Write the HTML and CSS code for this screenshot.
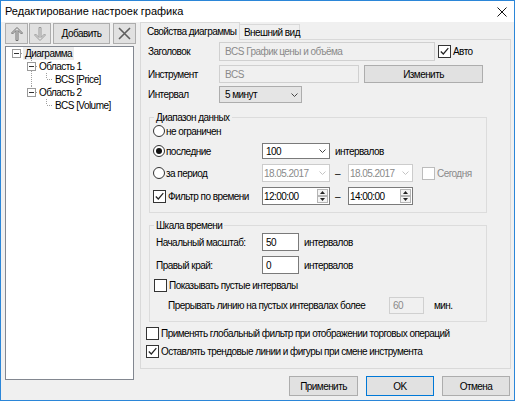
FILE: index.html
```html
<!DOCTYPE html>
<html lang="ru">
<head>
<meta charset="utf-8">
<title>Редактирование настроек графика</title>
<link rel="stylesheet" href="styles.css">
</head>
<body>
<div class="window">
  <div class="titlebar">
    <span class="title">Редактирование настроек графика</span>
    <svg class="close" width="10" height="10" viewBox="0 0 10 10"><path d="M0.5 0.5L9.5 9.5M9.5 0.5L0.5 9.5" stroke="#111" stroke-width="1" fill="none"/></svg>
  </div>
  <div class="main">
    <div class="leftcol">
      <div class="toolbar">
        <div class="tb tb-up"><svg width="12" height="14" viewBox="0 0 12 14"><path d="M6 0.5L11.5 6L10.5 7L7 3.5V13.5H5V3.5L1.5 7L0.5 6Z" fill="none" stroke="#6f6f6f"/></svg></div>
        <div class="tb tb-down"><svg width="12" height="14" viewBox="0 0 12 14"><path d="M6 13.5L11.5 8L10.5 7L7 10.5V0.5H5V10.5L1.5 7L0.5 8Z" fill="none" stroke="#9a9a9a"/></svg></div>
        <div class="tb tb-add">Добавить</div>
        <div class="tb tb-del"><svg width="13" height="13" viewBox="0 0 13 13"><path d="M1 1L12 12M12 1L1 12" stroke="#5f5f5f" stroke-width="1.6" fill="none"/></svg></div>
      </div>
      <div class="tree">
        <div class="trow">
          <svg width="17" height="13"><rect x="6.5" y="2.5" width="8" height="8" fill="#fff" stroke="#9a9a9a"/><path d="M8 6.5h5" stroke="#333"/><path d="M15 6.5h2" stroke="#a0a0a0" stroke-dasharray="1 1"/></svg>
          <span class="tlabel sel">Диаграмма</span>
        </div>
        <div class="trow">
          <svg width="31" height="13"><path d="M25.5 0v2M25.5 11v2M30 6.5h1" stroke="#a0a0a0" stroke-dasharray="1 1"/><rect x="21.5" y="2.5" width="8" height="8" fill="#fff" stroke="#9a9a9a"/><path d="M23 6.5h5" stroke="#333"/></svg>
          <span class="tlabel">Область 1</span>
        </div>
        <div class="trow">
          <svg width="47" height="13"><path d="M25.5 0v13M40.5 0v6M41 6.5h6" stroke="#a0a0a0" stroke-dasharray="1 1"/></svg>
          <span class="tlabel">BCS [Price]</span>
        </div>
        <div class="trow">
          <svg width="31" height="13"><path d="M25.5 0v2M30 6.5h1" stroke="#a0a0a0" stroke-dasharray="1 1"/><rect x="21.5" y="2.5" width="8" height="8" fill="#fff" stroke="#9a9a9a"/><path d="M23 6.5h5" stroke="#333"/></svg>
          <span class="tlabel">Область 2</span>
        </div>
        <div class="trow">
          <svg width="47" height="13"><path d="M40.5 0v6M41 6.5h6" stroke="#a0a0a0" stroke-dasharray="1 1"/></svg>
          <span class="tlabel">BCS [Volume]</span>
        </div>
      </div>
    </div>
    <div class="rightcol">
      <div class="tabs">
        <div class="tab active">Свойства диаграммы</div>
        <div class="tab inactive">Внешний вид</div>
      </div>
      <div class="page">
        <div class="frow r1">
          <span class="flabel">Заголовок</span>
          <div class="field dis w-title">BCS График цены и объёма</div>
          <span class="cb cb-auto"><svg width="9" height="9" viewBox="0 0 9 9"><path d="M0.8 4.5L3.3 7L8.3 1.2" fill="none" stroke="#222" stroke-width="1.2"/></svg></span>
          <span class="cb-text">Авто</span>
        </div>
        <div class="frow r2">
          <span class="flabel">Инструмент</span>
          <div class="field dis w-instr">BCS</div>
          <div class="btn w-change">Изменить</div>
        </div>
        <div class="frow r3">
          <span class="flabel">Интервал</span>
          <div class="dropbtn w-int">5 минут<svg class="chev" width="7" height="4" viewBox="0 0 7 4"><path d="M0.5 0.5L3.5 3.5L6.5 0.5" fill="none" stroke="#444"/></svg></div>
        </div>

        <div class="group group1">
          <span class="legend">Диапазон данных</span>
          <div class="grow g1a">
            <div class="gcell"><span class="rb"></span><span class="opt">не ограничен</span></div>
          </div>
          <div class="grow g1b">
            <div class="gcell"><span class="rb on"></span><span class="opt">последние</span></div>
            <div class="field w-68">100<svg class="chev" width="7" height="4" viewBox="0 0 7 4"><path d="M0.5 0.5L3.5 3.5L6.5 0.5" fill="none" stroke="#444"/></svg></div>
            <span class="after">интервалов</span>
          </div>
          <div class="grow g1c">
            <div class="gcell"><span class="rb"></span><span class="opt">за период</span></div>
            <div class="field date w-68">18.05.2017<svg class="chev" width="7" height="4" viewBox="0 0 7 4"><path d="M0.5 0.5L3.5 3.5L6.5 0.5" fill="none" stroke="#c4c4c4"/></svg></div>
            <span class="dash">–</span>
            <div class="field date w-65">18.05.2017<svg class="chev" width="7" height="4" viewBox="0 0 7 4"><path d="M0.5 0.5L3.5 3.5L6.5 0.5" fill="none" stroke="#c4c4c4"/></svg></div>
            <span class="cb dis cb-today"></span><span class="cb-text dis-text">Сегодня</span>
          </div>
          <div class="grow g1d">
            <div class="gcell"><span class="cb"><svg width="9" height="9" viewBox="0 0 9 9"><path d="M0.8 4.5L3.3 7L8.3 1.2" fill="none" stroke="#222" stroke-width="1.2"/></svg></span><span class="opt opt-cb">Фильтр по времени</span></div>
            <div class="field time w-68">12:00:00<span class="spin"><span class="spb"><svg width="5" height="3" viewBox="0 0 5 3"><path d="M2.5 0L5 3H0Z" fill="#222"/></svg></span><span class="spb"><svg width="5" height="3" viewBox="0 0 5 3"><path d="M0 0H5L2.5 3Z" fill="#222"/></svg></span></span></div>
            <span class="dash">–</span>
            <div class="field time w-65">14:00:00<span class="spin"><span class="spb"><svg width="5" height="3" viewBox="0 0 5 3"><path d="M2.5 0L5 3H0Z" fill="#222"/></svg></span><span class="spb"><svg width="5" height="3" viewBox="0 0 5 3"><path d="M0 0H5L2.5 3Z" fill="#222"/></svg></span></span></div>
          </div>
        </div>

        <div class="group group2">
          <span class="legend">Шкала времени</span>
          <div class="grow g2a">
            <span class="glabel">Начальный масштаб:</span>
            <div class="field w-37">50</div>
            <span class="after">интервалов</span>
          </div>
          <div class="grow g2b">
            <span class="glabel">Правый край:</span>
            <div class="field w-37">0</div>
            <span class="after">интервалов</span>
          </div>
          <div class="grow g2c">
            <span class="cb"></span><span class="opt opt-cb">Показывать пустые интервалы</span>
          </div>
          <div class="grow g2d">
            <span class="glabel">Прерывать линию на пустых интервалах более</span>
            <div class="field dis w-35">60</div>
            <span class="after after-min">мин.</span>
          </div>
        </div>

        <div class="brow">
          <span class="cb"></span><span class="opt opt-cb">Применять глобальный фильтр при отображении торговых операций</span>
        </div>
        <div class="brow">
          <span class="cb"><svg width="9" height="9" viewBox="0 0 9 9"><path d="M0.8 4.5L3.3 7L8.3 1.2" fill="none" stroke="#222" stroke-width="1.2"/></svg></span><span class="opt opt-cb">Оставлять трендовые линии и фигуры при смене инструмента</span>
        </div>
      </div>
      <div class="actions">
        <div class="btn abtn w-apply">Применить</div>
        <div class="btn abtn default w-ok">OK</div>
        <div class="btn abtn w-cancel">Отмена</div>
      </div>
    </div>
  </div>
</div>
</body>
</html>
```

FILE: styles.css
```css
* { box-sizing: border-box; margin: 0; padding: 0; }
html, body { width: 515px; height: 401px; overflow: hidden; }
body {
  font-family: "Liberation Sans", Arial, sans-serif;
  font-size: 10px;
  letter-spacing: -0.55px;
  line-height: 13px;
  color: #000;
  background: #fff;
}
svg { display: block; flex: none; }

.window {
  width: 515px;
  height: 401px;
  border: 1px solid #2b86d8;
  background: #f0f0f0;
  display: flex;
  flex-direction: column;
}
.titlebar {
  height: 21px;
  flex: none;
  background: #fff;
  display: flex;
  align-items: center;
  padding: 0 7px 0 4px;
}
.title { font-size: 11px; letter-spacing: 0; white-space: nowrap; }
.close { margin-left: auto; }

.main { flex: 1; display: flex; gap: 4px; padding: 0 4px; }

.leftcol { width: 131px; flex: none; display: flex; flex-direction: column; }
.toolbar { display: flex; margin-top: 1px; height: 21px; }
.tb {
  height: 21px;
  border: 1px solid #adadad;
  background: #e1e1e1;
  display: flex;
  align-items: center;
  justify-content: center;
  white-space: nowrap;
}
.tb-up { width: 23px; }
.tb-down { width: 22px; margin-left: 1px; }
.tb-add { width: 57px; margin-left: 2px; }
.tb-del { width: 23px; margin-left: 3px; }

.tree {
  margin-top: 2px;
  width: 129px;
  height: 334px;
  border: 1px solid #828790;
  background: #fff;
}
.trow { display: flex; align-items: center; height: 13px; }
.tlabel { padding: 0 2px; line-height: 13px; white-space: nowrap; }
.tlabel.sel { background: #ececec; }

.rightcol { width: 371px; flex: none; display: flex; flex-direction: column; }
.tabs { height: 17px; display: flex; align-items: flex-end; }
.tab {
  border: 1px solid #d9d9d9;
  border-bottom: none;
  white-space: nowrap;
  line-height: 13px;
}
.tab.active {
  width: 100px;
  height: 18px;
  margin-bottom: -1px;
  padding: 2px 0 0 6px;
  background: #f0f0f0;
  position: relative;
  z-index: 1;
}
.tab.inactive {
  width: 60px;
  height: 15px;
  padding: 1px 0 0 4px;
  border-left: none;
}
.page {
  height: 330px;
  flex: none;
  border: 1px solid #d9d9d9;
  background: #f0f0f0;
  display: flex;
  flex-direction: column;
}

.frow { display: flex; align-items: center; padding-left: 7px; }
.r1 { margin-top: 2px; height: 19px; }
.r2 { margin-top: 4px; height: 18px; }
.r3 { margin-top: 3px; height: 17px; }
.flabel { width: 71px; flex: none; white-space: nowrap; }

.field {
  height: 100%;
  flex: none;
  border: 1px solid #7a7a7a;
  background: #fff;
  display: flex;
  align-items: center;
  padding-left: 3px;
  white-space: nowrap;
  overflow: hidden;
}
.field.dis { border-color: #d0d0d0; background: #f0f0f0; color: #8a8a8a; padding-left: 5px; }
.field.date { border-color: #cccccc; color: #8a8a8a; padding-left: 1px; }
.field.time { padding-left: 1px; }
.chev { margin-left: auto; margin-right: 3px; }

.w-title { width: 216px; }
.w-instr { width: 140px; }
.w-change { width: 119px; margin-left: 5px; height: 100%; }
.w-int { width: 83px; }
.w-68 { width: 68px; }
.w-65 { width: 65px; }
.w-37 { width: 37px; }
.field.w-35 { width: 35px; padding-left: 3px; }

.btn {
  border: 1px solid #adadad;
  background: #e1e1e1;
  display: flex;
  align-items: center;
  justify-content: center;
  white-space: nowrap;
}
.dropbtn {
  height: 100%;
  border: 1px solid #adadad;
  background: #e5e5e5;
  display: flex;
  align-items: center;
  padding-left: 5px;
  white-space: nowrap;
}

.cb {
  width: 13px;
  height: 13px;
  flex: none;
  border: 1px solid #333;
  background: #fff;
  display: flex;
  align-items: center;
  justify-content: center;
}
.cb.dis { border-color: #bcbcbc; }
.cb-auto { margin-left: 3px; }
.cb-text { margin-left: 2px; white-space: nowrap; }
.dis-text { color: #8a8a8a; }
.cb-today { margin-left: 9px; }

.rb {
  width: 12px;
  height: 12px;
  flex: none;
  border: 1px solid #333;
  border-radius: 50%;
  background: #fff;
  display: flex;
  align-items: center;
  justify-content: center;
}
.rb.on::after {
  content: "";
  width: 6px;
  height: 6px;
  border-radius: 50%;
  background: #111;
}
.opt { margin-left: 1px; white-space: nowrap; }
.opt-cb { margin-left: 2px; }

.group {
  margin: 14px 0 0 8px;
  width: 338px;
  border: 1px solid #dcdcdc;
  display: flex;
  flex-direction: column;
  padding-bottom: 7px;
}
.group2 { margin-top: 12px; }
.legend {
  align-self: flex-start;
  margin: -7px 0 0 4px;
  padding: 0 2px;
  background: #f0f0f0;
  line-height: 13px;
  white-space: nowrap;
}
.grow { display: flex; align-items: center; padding-left: 3px; }
.gcell { width: 109px; flex: none; display: flex; align-items: center; }
.g1a { height: 14px; }
.g1b { margin-top: 5px; height: 16px; }
.g1c { margin-top: 5px; height: 18px; }
.g1d { margin-top: 5px; height: 18px; }
.after { margin-left: 5px; white-space: nowrap; }
.after-min { margin-left: 10px; }
.dash { margin: 0 8px 0 5px; }

.spin {
  margin-left: auto;
  margin-right: 1px;
  width: 11px;
  display: flex;
  flex-direction: column;
}
.spb {
  height: 7px;
  border: 1px solid #b5b5b5;
  background: #f4f4f4;
  display: flex;
  align-items: center;
  justify-content: center;
}

.g2a { margin-top: 1px; height: 18px; padding-left: 6px; }
.g2b { margin-top: 5px; height: 18px; padding-left: 6px; }
.g2a .glabel, .g2b .glabel { width: 106px; flex: none; white-space: nowrap; }
.g2c { margin-top: 5px; height: 13px; padding-left: 4px; }
.g2d { margin-top: 5px; height: 17px; padding-left: 18px; }
.g2d .glabel { width: 221px; flex: none; white-space: nowrap; }

.brow { display: flex; align-items: center; height: 13px; margin-top: 5px; padding-left: 5px; }

.actions {
  margin-top: 7px;
  height: 20px;
  display: flex;
  justify-content: flex-end;
  gap: 8px;
  padding-right: 1px;
}
.abtn { height: 20px; }
.w-apply { width: 69px; }
.w-ok { width: 68px; }
.w-cancel { width: 68px; }
.default { border-color: #0078d7; }
```
